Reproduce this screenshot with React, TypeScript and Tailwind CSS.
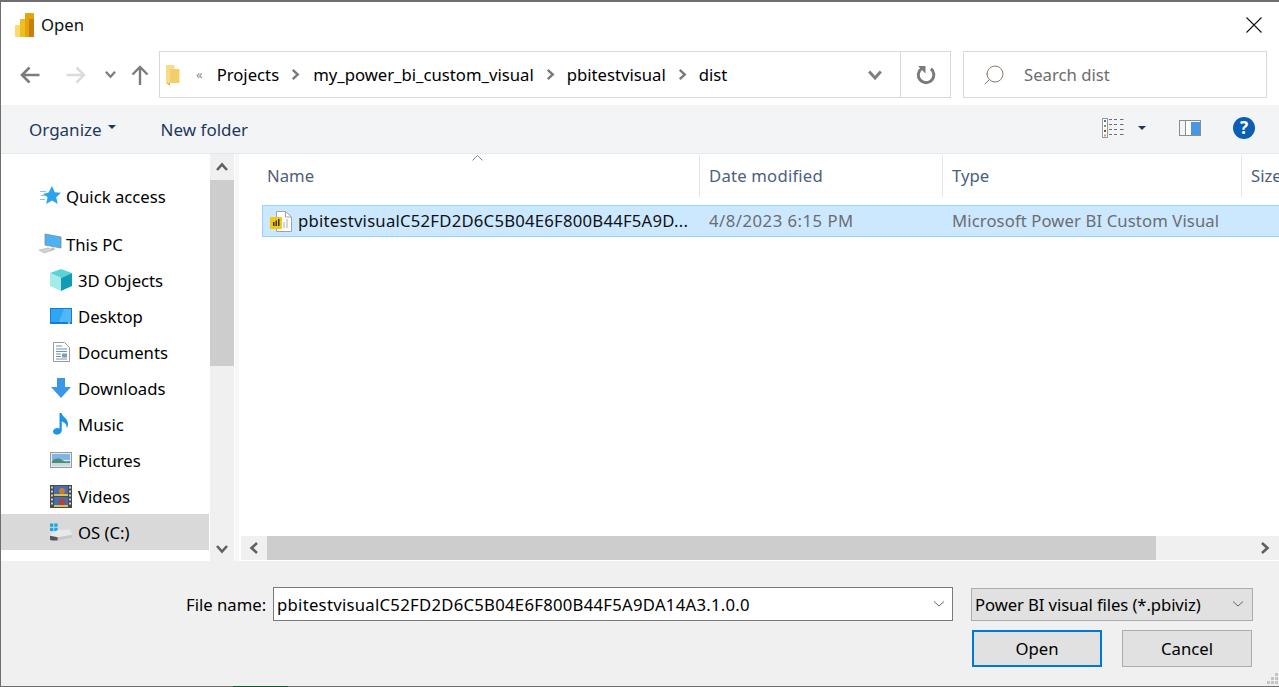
import { Search } from 'lucide-react';

// small inline drawings for the Windows shell icons
function PowerBiLogo() {
  return (
    <svg width="19" height="24" viewBox="0 0 19 24">
      <rect x="0" y="12" width="9" height="12" rx="1" fill="#f8dc6a" />
      <rect x="5" y="6" width="9" height="18" rx="1" fill="#eebf22" />
      <rect x="10" y="0" width="9" height="24" rx="1" fill="#e3a40c" />
      <rect x="14" y="6" width="5" height="18" fill="#c7800b" />
    </svg>
  );
}

function Arrow({ color, flip }: { color: string; flip?: boolean }) {
  return (
    <svg width="20" height="18" viewBox="0 0 20 18" className={flip ? 'rotate-180' : ''}>
      <path d="M19.500 9H2M9.500 1.500 2 9l7.500 7.500" fill="none" stroke={color} strokeWidth="2.600" />
    </svg>
  );
}

function Chevron({ dir, color, size = 12 }: { dir: 'up' | 'down' | 'left' | 'right'; color: string; size?: number }) {
  const d = {
    up: 'M1 9 6 3.500 11 9',
    down: 'M1 3 6 8.500 11 3',
    left: 'M9 1 3.500 6 9 11',
    right: 'M3 1 8.500 6 3 11',
  }[dir];
  return (
    <svg width={size} height={size} viewBox="0 0 12 12">
      <path d={d} fill="none" stroke={color} strokeWidth="2.600" />
    </svg>
  );
}

function ThinChevron({ color }: { color: string }) {
  return (
    <svg width="12" height="8" viewBox="0 0 12 8">
      <path d="M1 1.500 6 6l5-4.500" fill="none" stroke={color} strokeWidth="1" />
    </svg>
  );
}

function FolderIcon() {
  return (
    <svg width="15" height="22" viewBox="0 0 15 22">
      <path d="M1 1h8.500v18H1z" fill="#f7dc8b" />
      <path d="M5 5h9.500v14H5z" fill="#f3cf6a" />
      <path d="M1 19h4v3z" fill="#e6b84a" />
    </svg>
  );
}

function RefreshIcon() {
  return (
    <svg width="20" height="20" viewBox="0 0 20 20">
      <path d="M5.500 3.600a7.800 7.800 0 1 0 9.400.2" fill="none" stroke="#7a7a7a" strokeWidth="3" />
      <path d="M2 1h7.500v7.500z" fill="#7a7a7a" />
    </svg>
  );
}

function ViewIcon() {
  return (
    <svg width="22" height="20" viewBox="0 0 22 20">
      <rect x="0.500" y="0.500" width="5" height="19" fill="#fff" stroke="#9a9a9a" />
      <rect x="2" y="2" width="2" height="2" fill="#3f7f9f" />
      <rect x="2" y="7" width="2" height="2" fill="#7a9a5a" />
      <rect x="2" y="12" width="2" height="2" fill="#c0392b" />
      <rect x="2" y="16.500" width="2" height="2" fill="#b5a76a" />
      <path d="M7 1.500h3M12 1.500h3M18 1.500h3.500M7 6.500h3M12 6.500h3M18 6.500h3.500M7 11.500h3M12 11.500h3M18 11.500h3.500M7 16.500h3M12 16.500h3M18 16.500h3.500" stroke="#6f6f6f" strokeWidth="1" />
    </svg>
  );
}

function PaneIcon() {
  return (
    <svg width="22" height="16" viewBox="0 0 22 16">
      <rect x="0.500" y="0.500" width="21" height="15" fill="#fff" stroke="#8c8c8c" />
      <rect x="1" y="1" width="5" height="14" fill="#f4f4f4" />
      <rect x="6" y="1" width="1" height="14" fill="#8c8c8c" />
      <rect x="12" y="2" width="9" height="13" fill="#4a96e0" />
    </svg>
  );
}

function HelpIcon() {
  return (
    <div className="flex h-[22px] w-[22px] items-center justify-center rounded-full bg-[#0a5fb4] text-[17px] font-bold leading-none text-white">?</div>
  );
}

function CaretDown({ color }: { color: string }) {
  return (
    <svg width="8" height="4" viewBox="0 0 8 4">
      <path d="M0 0h8L4 4z" fill={color} />
    </svg>
  );
}

function PbivizIcon() {
  return (
    <svg width="22" height="21" viewBox="0 0 22 21">
      <path d="M6.500.5h9l6 5.500v14.500h-15z" fill="#fff" stroke="#a3a3a3" />
      <path d="M15.500.5V6h6" fill="none" stroke="#a3a3a3" />
      <rect x="13" y="11" width="2" height="6" fill="#d5d5d5" />
      <rect x="16" y="8" width="2" height="9" fill="#d5d5d5" />
      <rect x="0" y="6" width="12" height="12" rx="1" fill="#f2c811" />
      <rect x="3" y="11" width="1.500" height="4" fill="#333" />
      <rect x="5.500" y="9.500" width="1.500" height="5.500" fill="#333" />
      <rect x="8" y="8" width="1.500" height="7" fill="#333" />
    </svg>
  );
}

function StarIcon() {
  return (
    <svg width="21" height="20" viewBox="0 0 21 20">
      <path d="M12 0l2.700 6.200 6.300.6-4.800 4.400 1.500 6.800-5.700-3.500-5.900 3.500 1.500-6.800L3 8l5.600-1.600z" fill="#2ba3ef" />
      <path d="M0 5.500h6M1 9.500h4M0 13.500h5" stroke="#7cc7f5" strokeWidth="1" />
    </svg>
  );
}

function PcIcon() {
  return (
    <svg width="24" height="22" viewBox="0 0 24 22">
      <path d="M7 1l16 3v11L7 12z" fill="#4db2f2" stroke="#7f8c95" strokeWidth="0.800" />
      <path d="M15 14l2 3h-5z" fill="#b0b7bc" />
      <path d="M1 17l9-2 5 2-9 3z" fill="#d0d4d7" stroke="#a8adb1" strokeWidth="0.600" />
    </svg>
  );
}

function CubeIcon() {
  return (
    <svg width="22" height="22" viewBox="0 0 22 22">
      <path d="M11 0l11 4-11 5L0 4z" fill="#5ad3d8" />
      <path d="M0 4l11 5v13L0 17z" fill="#a5ece9" />
      <path d="M22 4 11 9v13l11-5z" fill="#129cb4" />
    </svg>
  );
}

function DesktopIcon() {
  return (
    <svg width="22" height="16" viewBox="0 0 22 16">
      <rect width="22" height="16" fill="#0f7fd6" />
      <rect x="1" y="1" width="20" height="13" fill="#30a5f3" />
      <path d="M14 1h7v13H9z" fill="#52b7f6" />
      <rect x="18" y="14.500" width="2" height="1" fill="#fff" />
    </svg>
  );
}

function DocIcon() {
  return (
    <svg width="17" height="20" viewBox="0 0 17 20">
      <path d="M.5.5h11l5 5v14H.5z" fill="#fff" stroke="#9a9a9a" />
      <path d="M3 4h6M3 7h11M3 9.500h11M3 12h5M3 14.500h5M3 17h11" stroke="#6e93b8" strokeWidth="1" />
      <rect x="9" y="11.500" width="5" height="4" fill="#7c9cb8" />
    </svg>
  );
}

function DownloadIcon() {
  return (
    <svg width="20" height="20" viewBox="0 0 20 20">
      <path d="M6 0h8v9h6l-10 11L0 9h6z" fill="#3a97e8" />
    </svg>
  );
}

function MusicIcon() {
  return (
    <svg width="18" height="22" viewBox="0 0 18 22">
      <path d="M7.500 0h2.200c.5 4 6.300 5 6.300 11 0 1.500-.4 3-1.200 4.200.2-4-3-6.200-5-6.600V17c0 2.800-2.500 4.700-5 4.700C2.700 21.700 1 20.400 1 18.600c0-2.100 2.300-3.600 4.500-3.600.8 0 1.500.2 2 .5z" fill="#1b94ea" />
    </svg>
  );
}

function PictureIcon() {
  return (
    <svg width="22" height="16" viewBox="0 0 22 16">
      <rect x="0.500" y="0.500" width="21" height="15" fill="#d9ecf8" stroke="#9a9a9a" />
      <rect x="2" y="2" width="18" height="6" fill="#7fb6e2" />
      <path d="M2 9c3-3 7-3 10-1s5 1 8 1v5H2z" fill="#4f8c7a" />
      <path d="M2 11h18v3H2z" fill="#c6dbe0" />
    </svg>
  );
}

function VideoIcon() {
  return (
    <svg width="22" height="23" viewBox="0 0 22 23">
      <rect width="22" height="23" fill="#4a4a4a" />
      <rect x="4" y="1" width="14" height="10" fill="#3f6fb5" />
      <rect x="4" y="12" width="14" height="10" fill="#3f6fb5" />
      <circle cx="12" cy="6" r="3" fill="#d8762a" />
      <circle cx="12" cy="17" r="3" fill="#c83a2a" />
      <rect x="4" y="9" width="14" height="2" fill="#d9c34a" />
      <rect x="4" y="20" width="14" height="2" fill="#d9c34a" />
      <path d="M2 1.500v20M20 1.500v20" stroke="#eee" strokeWidth="1.600" strokeDasharray="2 2" />
    </svg>
  );
}

function DriveIcon() {
  return (
    <svg width="23" height="18" viewBox="0 0 23 18">
      <path d="M0 0h3.500v3.500H0zM4.500 0H8v3.500H4.500zM0 4.500h3.500V8H0zM4.500 4.500H8V8H4.500z" fill="#15a9e6" />
      <path d="M0 12l8-5 13-.5 2 5.500v3L8 18H2l-2-1z" fill="#e8e8e8" />
      <path d="M8 18l15-3v-3L8 14.500z" fill="#c8c8c8" />
      <path d="M0 13l8 1.500V18H2l-2-1z" fill="#555" />
    </svg>
  );
}

function NavItem({ icon, label, active }: { icon: React.ReactNode; label: string; active?: boolean }) {
  return (
    <div className={`flex h-9 w-[208px] shrink-0 items-center ${active ? 'bg-[#d9d9d9]' : ''}`}>
      <div className="w-[49px] shrink-0" />
      <div className="flex w-[22px] shrink-0 justify-center">{icon}</div>
      <span className="ml-[6px] pt-[2px] text-black">{label}</span>
    </div>
  );
}

function ColHeader({ label, width }: { label: string; width: string }) {
  return (
    <div className={`flex h-full shrink-0 items-center border-r border-[#e5e5e5] pl-[9px] text-[#4c607a] ${width}`}>
      {label}
    </div>
  );
}

export default function App() {
  return (
    <div className="flex h-[687px] w-[1279px] flex-col overflow-hidden border-t-2 border-l border-[#6e6e6e] bg-white text-[16.7px] text-black [font-family:'Noto_Sans',sans-serif]">
      {/* Title bar */}
      <div className="flex h-[49px] shrink-0 items-center pr-[17px] pb-[3px] pl-[14px]">
        <PowerBiLogo />
        <span className="ml-[7px] text-[#111]">Open</span>
        <svg width="16" height="16" viewBox="0 0 16 16" className="ml-auto">
          <path d="M.5.5l15 15M15.500.5l-15 15" stroke="#111" strokeWidth="1.100" />
        </svg>
      </div>

      {/* Address row */}
      <div className="flex h-[47px] shrink-0 items-center">
        <div className="ml-[19px] flex w-[139px] shrink-0 items-center">
          <Arrow color="#7c7c7c" />
          <div className="ml-[26px]"><Arrow color="#dcdcdc" flip /></div>
          <div className="ml-[19px]"><Chevron dir="down" color="#808080" size={11} /></div>
          <svg width="18" height="20" viewBox="0 0 18 20" className="ml-[15px]">
            <path d="M9 20V2M1.500 9.500 9 2l7.500 7.500" fill="none" stroke="#7c7c7c" strokeWidth="2.400" />
          </svg>
        </div>
        <div className="flex h-full w-[792px] shrink-0 items-center border border-[#d9d9d9] pl-[5px]">
          <FolderIcon />
          <span className="ml-[16px] text-[13px] text-[#8a8a8a]">«</span>
          <span className="ml-[14px]">Projects</span>
          <div className="mx-[11px] mr-[12px]"><Chevron dir="right" color="#7a7a7a" size={11} /></div>
          <span>my_power_bi_custom_visual</span>
          <div className="mx-[11px]"><Chevron dir="right" color="#7a7a7a" size={11} /></div>
          <span>pbitestvisual</span>
          <div className="mx-[11px]"><Chevron dir="right" color="#7a7a7a" size={11} /></div>
          <span>dist</span>
          <div className="ml-auto flex h-full items-center">
            <Chevron dir="down" color="#7f7f7f" size={14} />
            <div className="ml-[18px] flex h-full w-[50px] items-center justify-center border-l border-[#d9d9d9]">
              <RefreshIcon />
            </div>
          </div>
        </div>
        <div className="ml-[12px] flex h-full w-[304px] shrink-0 items-center border border-[#d9d9d9] pl-[18px] text-[#6d6d6d]">
          <Search size={24} strokeWidth={1} color="#8c7a6a" className="-scale-x-100" />
          <span className="ml-[18px]">Search dist</span>
        </div>
      </div>

      {/* Toolbar */}
      <div className="mt-[7px] flex h-[49px] shrink-0 items-center border-b border-[#e6e7e8] bg-[#f3f4f6] pb-[3px] pl-[28px] text-[17px] text-[#1e395b]">
        <span className="pt-[4px]">Organize</span>
        <div className="mb-px ml-[6px]"><CaretDown color="#1e395b" /></div>
        <span className="ml-[45px] pt-[4px]">New folder</span>
        <div className="ml-auto flex items-center pr-[24px]">
          <ViewIcon />
          <div className="ml-[14px]"><CaretDown color="#1e395b" /></div>
          <div className="ml-[33px]"><PaneIcon /></div>
          <div className="ml-[32px]"><HelpIcon /></div>
        </div>
      </div>

      {/* Main */}
      <div className="flex h-[407px] shrink-0">
        <div className="flex w-[209px] shrink-0 flex-col pt-[24px]">
          <div className="flex h-9 shrink-0 items-center pl-[39px]">
            <StarIcon />
            <span className="ml-[5px] pt-[2px]">Quick access</span>
          </div>
          <div className="mt-3 flex h-9 shrink-0 items-center pl-[37px]">
            <PcIcon />
            <span className="ml-[4px] pt-[2px]">This PC</span>
          </div>
          <NavItem icon={<CubeIcon />} label="3D Objects" />
          <NavItem icon={<DesktopIcon />} label="Desktop" />
          <NavItem icon={<DocIcon />} label="Documents" />
          <NavItem icon={<DownloadIcon />} label="Downloads" />
          <NavItem icon={<MusicIcon />} label="Music" />
          <NavItem icon={<PictureIcon />} label="Pictures" />
          <NavItem icon={<VideoIcon />} label="Videos" />
          <NavItem icon={<DriveIcon />} label="OS (C:)" active />
        </div>

        {/* Sidebar scrollbar */}
        <div className="flex w-6 shrink-0 flex-col bg-[#f0f0f0]">
          <div className="flex h-[26px] shrink-0 items-center justify-center"><Chevron dir="up" color="#606060" /></div>
          <div className="h-[186px] shrink-0 bg-[#cdcdcd]" />
          <div className="mt-auto flex h-[25px] shrink-0 items-center justify-center"><Chevron dir="down" color="#606060" /></div>
        </div>
        <div className="ml-px w-1 shrink-0 bg-[#f7f7f7]" />

        {/* File list */}
        <div className="relative flex min-w-0 flex-1 flex-col overflow-hidden pl-px">
          <div className="absolute top-px left-[233px]">
            <svg width="11" height="6" viewBox="0 0 11 6"><path d="M.5 5.500 5.500.5l5 5" fill="none" stroke="#8a8a8a" /></svg>
          </div>
          <div className="flex h-[43px] shrink-0 items-center pt-[1px]">
            <div className="w-[18px] shrink-0" />
            <ColHeader label="Name" width="w-[442px]" />
            <ColHeader label="Date modified" width="w-[243px] tracking-[0.2px]" />
            <ColHeader label="Type" width="w-[299px]" />
            <div className="pl-[9px] text-[#4c607a]">Size</div>
          </div>
          <div className="mt-2 ml-[22px] flex h-[32px] w-[1100px] shrink-0 items-center border border-[#99d1ff] bg-[#cce8ff]">
            <div className="ml-[7px]"><PbivizIcon /></div>
            <span className="ml-[6px] w-[411px] shrink-0 tracking-[0.23px] text-[#111]">pbitestvisualC52FD2D6C5B04E6F800B44F5A9D...</span>
            <span className="w-[243px] shrink-0 tracking-[0.5px] text-[#6d6d6d]">4/8/2023 6:15 PM</span>
            <span className="shrink-0 tracking-[0.1px] text-[#6d6d6d]">Microsoft Power BI Custom Visual</span>
          </div>
          <div className="mt-auto mb-px ml-px flex h-6 shrink-0 items-center bg-[#f0f0f0]">
            <div className="flex w-[26px] shrink-0 justify-center"><Chevron dir="left" color="#606060" /></div>
            <div className="h-full w-[889px] shrink-0 bg-[#cdcdcd]" />
            <div className="ml-auto flex w-[26px] justify-center pr-[2px]"><Chevron dir="right" color="#606060" /></div>
          </div>
        </div>
      </div>

      {/* Bottom panel */}
      <div className="relative flex min-h-0 flex-1 flex-col bg-[#f0f0f0]">
        <div className="mt-[26px] flex h-[34px] items-center">
          <span className="ml-[185px] w-[87px] shrink-0 pt-[2px]">File name:</span>
          <div className="flex h-full w-[680px] shrink-0 items-center border border-[#7a7a7a] bg-white pl-[3px]">
            <span className="pt-[2px] tracking-[0.27px]">pbitestvisualC52FD2D6C5B04E6F800B44F5A9DA14A3.1.0.0</span>
            <div className="mr-[7px] ml-auto"><ThinChevron color="#666" /></div>
          </div>
          <div className="ml-[18px] flex h-[33px] w-[282px] shrink-0 items-center border border-[#adadad] bg-[#e1e1e1] pl-[3px]">
            <span className="pt-[2px] tracking-[-0.1px]">Power BI visual files (*.pbiviz)</span>
            <div className="mr-[8px] ml-auto"><ThinChevron color="#666" /></div>
          </div>
        </div>
        <div className="mt-[9px] ml-[971px] flex gap-5">
          <button className="h-[37px] w-[130px] border-2 border-[#0078d7] bg-[#e1e1e1]">Open</button>
          <button className="h-[37px] w-[130px] border border-[#adadad] bg-[#e1e1e1]">Cancel</button>
        </div>
        {/* resize grip */}
        <svg width="12" height="12" viewBox="0 0 12 12" className="absolute right-px bottom-[2px]">
          <path d="M9 0h3v3H9zM5 4h3v3H5zM9 4h3v3H9zM1 8h3v3H1zM5 8h3v3H5zM9 8h3v3H9z" fill="#c4c4c4" />
        </svg>
        <div className="mt-auto flex h-px shrink-0 bg-[#6e6e6e]">
          <div className="ml-[232px] h-px w-[55px] bg-[#14532d]" />
        </div>
      </div>
    </div>
  );
}
